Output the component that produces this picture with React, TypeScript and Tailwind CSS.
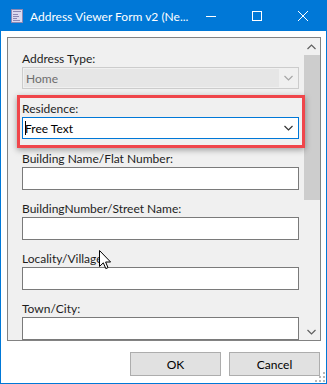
import React from 'react';

function Chevron({ up = false, color = '#333' }: { up?: boolean; color?: string }) {
  return (
    <svg width="9" height="6" viewBox="0 0 9 6" className="block">
      <polyline
        points={up ? '0.5,5 4.5,1 8.5,5' : '0.5,1 4.5,5 8.5,1'}
        fill="none"
        stroke={color}
        strokeWidth="1.2"
      />
    </svg>
  );
}

function FormIcon() {
  return (
    <svg width="12" height="14" viewBox="0 0 12 14" className="block">
      <rect x="0.5" y="0.5" width="11" height="13" fill="#dcdaf0" stroke="#8c88b4" />
      <rect x="2" y="2" width="8" height="1" fill="#8c88b4" />
      <rect x="2" y="5" width="5" height="1" fill="#8c88b4" />
      <rect x="2" y="7" width="6" height="1" fill="#8c88b4" />
      <rect x="2" y="9" width="4" height="1" fill="#8c88b4" />
      <rect x="2" y="11" width="7" height="1" fill="#8c88b4" />
    </svg>
  );
}

function TitleBar() {
  return (
    <div className="h-[30px] bg-[#0078d7] flex items-center text-white text-[12px] leading-[15px] shrink-0">
      <div className="pl-[10px] pr-[7px]">
        <FormIcon />
      </div>
      <span className="flex-1 whitespace-nowrap">Address Viewer Form v2 (Ne...</span>
      <div className="w-[46px] h-full flex items-center justify-center">
        <div className="w-[10px] h-[1px] bg-white" />
      </div>
      <div className="w-[46px] h-full flex items-center justify-center">
        <div className="w-[10px] h-[10px] border border-white" />
      </div>
      <div className="w-[46px] h-full flex items-center justify-center">
        <svg width="10" height="10" viewBox="0 0 10 10" className="block">
          <path d="M0 0 L10 10 M10 0 L0 10" stroke="white" strokeWidth="1" />
        </svg>
      </div>
    </div>
  );
}

function Field({ label, children }: { label: string; children: React.ReactNode }) {
  return (
    <div className="h-[50px] shrink-0 flex flex-col">
      <div className="h-[15px] whitespace-nowrap">{label}</div>
      <div className="mt-[1px]">{children}</div>
    </div>
  );
}

function TextBox() {
  return <div className="h-[23px] border border-[#7a7a7a] bg-white" />;
}

export default function App() {
  return (
    <div className="relative w-[327px] h-[384px] border border-[#0078d7] bg-white flex flex-col overflow-hidden font-['Lato',sans-serif] text-[12px] leading-[15px] text-[#1e1e1e]">
      <TitleBar />

      <div className="pl-[6px] pr-[5px] pt-[6px]">
        <div className="relative h-[304px] border border-[#828282] bg-[#f0f0f0] flex overflow-hidden">
          <div className="flex-1 flex flex-col pl-[14px] pr-[4px] pt-[13px]">
            <Field label="Address Type:">
              <div className="h-[22px] border border-[#cccccc] p-[1px] flex">
                <div className="flex-1 bg-[#e6e6e6] text-[#6d6d6d] pl-[2px] flex items-center">Home</div>
                <div className="w-[18px] flex items-center justify-center">
                  <Chevron color="#a6a6a6" />
                </div>
              </div>
            </Field>
            <Field label="Residence:">
              <div className="h-[22px] border border-[#0078d7] bg-white flex items-center">
                <div className="flex-1 flex items-center pl-[2px] text-black">
                  <span className="w-[1px] h-[14px] bg-black -mr-[1px]" />
                  <span>Free Text</span>
                </div>
                <div className="w-[19px] flex items-center justify-center">
                  <Chevron color="#333333" />
                </div>
              </div>
            </Field>
            <Field label="Building Name/Flat Number:">
              <TextBox />
            </Field>
            <Field label="BuildingNumber/Street Name:">
              <TextBox />
            </Field>
            <Field label="Locality/Village">
              <TextBox />
            </Field>
            <Field label="Town/City:">
              <TextBox />
            </Field>
          </div>

          <div className="w-[17px] flex flex-col bg-[#f0f0f0]">
            <div className="h-[17px] flex items-center justify-center">
              <Chevron up color="#606060" />
            </div>
            <div className="h-[145px] bg-[#cdcdcd] ml-[1px]" />
            <div className="flex-1" />
            <div className="h-[17px] flex items-center justify-center">
              <Chevron color="#606060" />
            </div>
          </div>

          <div className="absolute left-[9px] top-[57px] w-[288px] h-[53px] border-[3px] border-[#f0464b] shadow-[0_2px_6px_rgba(0,0,0,0.35)]" />
        </div>
      </div>

      <div className="flex justify-end gap-[8px] pr-[6px] mt-[11px]">
        <button className="w-[91px] h-[24px] bg-[#e1e1e1] border border-[#adadad] text-black">OK</button>
        <button className="w-[91px] h-[24px] bg-[#e1e1e1] border border-[#adadad] text-black">Cancel</button>
      </div>

      <svg width="10" height="10" viewBox="0 0 10 10" className="absolute right-[1px] bottom-[1px]">
        <rect x="8" y="0" width="2" height="2" fill="#b8b8b8" />
        <rect x="4" y="4" width="2" height="2" fill="#b8b8b8" />
        <rect x="8" y="4" width="2" height="2" fill="#b8b8b8" />
        <rect x="0" y="8" width="2" height="2" fill="#b8b8b8" />
        <rect x="4" y="8" width="2" height="2" fill="#b8b8b8" />
        <rect x="8" y="8" width="2" height="2" fill="#b8b8b8" />
      </svg>

      <svg width="13" height="20" viewBox="0 0 13 20" className="absolute left-[98px] top-[249px]">
        <path
          d="M0.5 0.5 L0.5 16.5 L4.3 12.8 L6.8 18.6 L9 17.6 L6.6 12 L11.6 12 Z"
          fill="white"
          stroke="black"
          strokeWidth="1"
          strokeLinejoin="miter"
        />
      </svg>
    </div>
  );
}
